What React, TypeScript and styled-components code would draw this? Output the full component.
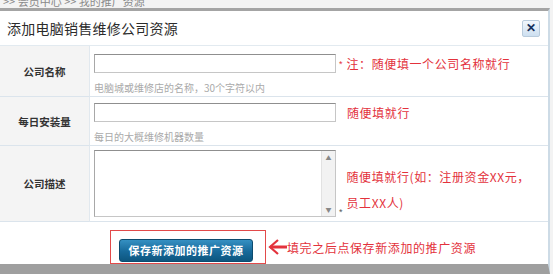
import * as React from 'react';
import styled, { createGlobalStyle } from 'styled-components';

const GlobalStyle = createGlobalStyle`
	html, body {
		margin: 0;
		padding: 0;
		background: #d4d4d4;
	}
	body {
		width: 553px;
		height: 274px;
		overflow: hidden;
		font-family: "Noto Sans CJK SC", "Liberation Sans", sans-serif;
	}
`;

const RED = '#e3323c';

const Page = styled.div`
	display: flex;
	flex-direction: column;
	width: 553px;
	height: 274px;
	background: #f3f3f3;
`;

const Crumb = styled.div`
	height: 8px;
	overflow: hidden;
	padding-left: 3px;
	font-size: 11px;
	line-height: 2px;
	color: #8a8a8a;
	white-space: nowrap;
`;

const Dialog = styled.div`
	flex: 1;
	display: flex;
	flex-direction: column;
	width: 548px;
	background: #fff;
	border-top: 3px solid #a4a4a4;
	border-right: 2px solid #cddbe6;
	border-bottom: 10px solid #9f9f9f;
`;

const Header = styled.div`
	height: 34px;
	display: flex;
	align-items: center;
	justify-content: space-between;
	padding: 0 8px 0 7px;
	border-bottom: 1px solid #e2eaf0;
`;

const Title = styled.h1`
	margin: 0;
	font-size: 14px;
	font-weight: normal;
	letter-spacing: 0.25px;
	color: #2b2b2b;
`;

const Close = styled.button`
	width: 18px;
	height: 17px;
	padding: 0;
	display: flex;
	align-items: center;
	justify-content: center;
	background: linear-gradient(#f1f7fc, #cddff0);
	border: 1px solid #b8cbdc;
	border-radius: 2px;
	color: #14305c;
	font: bold 12px "Liberation Sans", sans-serif;
`;

const Form = styled.div`
	display: grid;
	grid-template-columns: 90px 1fr;
	grid-template-rows: 51px 49px 76px;
`;

const Label = styled.div`
	display: flex;
	align-items: center;
	justify-content: center;
	background: #f4f4f4;
	border-right: 1px solid #e1e8ee;
	border-bottom: 1px solid #dbe4ec;
	font-size: 10.5px;
	font-weight: bold;
	color: #333;
`;

const Cell = styled.div<{ $top: number }>`
	padding: ${p => p.$top}px 0 0 4px;
	border-bottom: 1px solid #dbe4ec;
	box-sizing: border-box;
`;

const Line = styled.div<{ $align?: string }>`
	display: flex;
	align-items: ${p => p.$align || 'center'};
`;

const Input = styled.input`
	width: 242px;
	height: 19px;
	box-sizing: border-box;
	margin: 0;
	border: 1px solid #c6c6c6;
	border-top-color: #8f8f8f;
	border-left-color: #a8a8a8;
	background: #fff;
`;

const Hint = styled.div`
	margin-top: 6px;
	font-size: 10px;
	line-height: 12px;
	color: #aaa;
`;

const Star = styled.span<{ $color: string }>`
	font-size: 9px;
	color: ${p => p.$color};
	margin: 0 4px 0 3px;
	font-family: "Liberation Sans", sans-serif;
`;

const Note = styled.span<{ $left?: number }>`
	margin-left: ${p => p.$left || 0}px;
	font-size: 12px;
	letter-spacing: 0.6px;
	color: ${RED};
	line-height: 25px;
`;

const AreaFrame = styled.div`
	width: 242px;
	height: 67px;
	box-sizing: border-box;
	display: flex;
	border: 1px solid #c6c6c6;
	border-top-color: #8f8f8f;
	border-left-color: #a8a8a8;
`;

const Area = styled.textarea`
	flex: 1;
	border: 0;
	margin: 0;
	resize: none;
	outline: none;
`;

const Scroll = styled.div`
	width: 13px;
	display: flex;
	flex-direction: column;
	justify-content: space-between;
	align-items: center;
	background: #f2f2f2;
	border-left: 1px solid #e2e2e2;
	font-size: 6px;
	color: #888;
	padding: 2px 0;
`;

const AreaNote = styled.div`
	margin-bottom: 2px;
	width: 190px;
`;

const Footer = styled.div`
	flex: 1;
	display: flex;
	align-items: flex-end;
	padding-left: 110px;
`;

const Marked = styled.div`
	width: 156px;
	height: 34px;
	box-sizing: border-box;
	border: 1px solid #e24a4a;
	padding: 5px 0 0 8px;
`;

const SaveButton = styled.button`
	width: 134px;
	height: 23px;
	padding: 0;
	border: 1px solid #0c4b6e;
	border-radius: 3px;
	background: linear-gradient(#3590c2, #17699a 55%, #0d567f);
	color: #fff;
	font-family: "Noto Sans CJK SC", sans-serif;
	font-size: 11px;
	font-weight: bold;
	letter-spacing: 0.5px;
`;

const Pointer = styled.div`
	display: flex;
	align-items: center;
	align-self: flex-end;
	height: 34px;
	padding-top: 0;
	margin-left: 1px;
`;

const Arrow = () => (
	<svg width="20" height="18" viewBox="0 0 20 18">
		<path d="M11 2 L3 9 L11 16" stroke={RED} strokeWidth="2.2" fill="none" />
		<path d="M3 9 H20" stroke={RED} strokeWidth="3" />
	</svg>
);

export default function App() {
	return (
		<>
			<GlobalStyle />
			<Page>
				<Crumb>&gt;&gt; 会员中心 &gt;&gt; 我的推广资源</Crumb>
				<Dialog>
					<Header>
						<Title>添加电脑销售维修公司资源</Title>
						<Close>✕</Close>
					</Header>
					<Form>
						<Label>公司名称</Label>
						<Cell $top={5}>
							<Line>
								<Input />
								<Star $color={RED}>*</Star>
								<Note>注：随便填一个公司名称就行</Note>
							</Line>
							<Hint>电脑城或维修店的名称，30个字符以内</Hint>
						</Cell>
						<Label>每日安装量</Label>
						<Cell $top={3}>
							<Line>
								<Input />
								<Note $left={11}>随便填就行</Note>
							</Line>
							<Hint>每日的大概维修机器数量</Hint>
						</Cell>
						<Label>公司描述</Label>
						<Cell $top={4}>
							<Line $align="flex-end">
								<AreaFrame>
									<Area />
									<Scroll>
										<span>▲</span>
										<span>▼</span>
									</Scroll>
								</AreaFrame>
								<Star $color="#555">*</Star>
								<AreaNote>
									<Note>随便填就行(如：注册资金XX元，员工XX人)</Note>
								</AreaNote>
							</Line>
						</Cell>
					</Form>
					<Footer>
						<Marked>
							<SaveButton>保存新添加的推广资源</SaveButton>
						</Marked>
						<Pointer>
							<Arrow />
							<Note>填完之后点保存新添加的推广资源</Note>
						</Pointer>
					</Footer>
				</Dialog>
			</Page>
		</>
	);
}
